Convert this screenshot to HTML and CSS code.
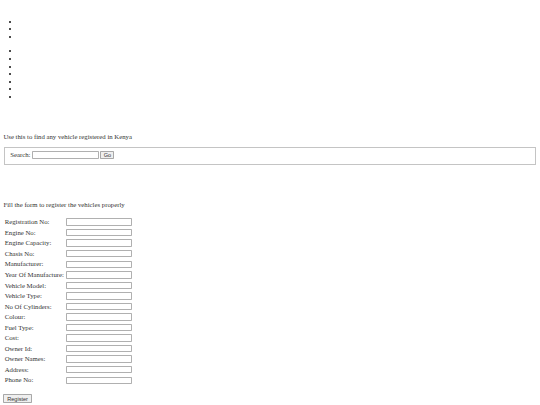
FILE: index.html
```html
<!DOCTYPE html>
<html lang="en">
<head>
<meta charset="utf-8">
<title>Vehicle Registry</title>
<link rel="stylesheet" href="styles.css">
</head>
<body>
<div class="nav">
  <ul class="menu">
    <li><a href="#"></a></li>
    <li><a href="#"></a></li>
    <li><a href="#"></a></li>
  </ul>
  <ul class="menu">
    <li><a href="#"></a></li>
    <li><a href="#"></a></li>
    <li><a href="#"></a></li>
    <li><a href="#"></a></li>
    <li><a href="#"></a></li>
    <li><a href="#"></a></li>
    <li><a href="#"></a></li>
  </ul>
</div>

<div class="search-section">
  <p class="intro">Use this to find any vehicle registered in Kenya</p>
  <form class="search-form">
    <fieldset class="search-box">
      <div class="search-row">
        <label class="search-label">Search:</label>
        <input class="field" type="text">
        <input class="btn btn-go" type="submit" value="Go">
      </div>
    </fieldset>
  </form>
</div>

<div class="register-section">
  <p class="intro-reg">Fill the form to register the vehicles properly</p>
  <form class="reg-form">
    <div class="reg-grid">
      <span class="label">Registration No:</span><input class="field" type="text">
      <span class="label">Engine No:</span><input class="field" type="text">
      <span class="label">Engine Capacity:</span><input class="field" type="text">
      <span class="label">Chasis No:</span><input class="field" type="text">
      <span class="label">Manufacturer:</span><input class="field" type="text">
      <span class="label">Year Of Manufacture:</span><input class="field" type="text">
      <span class="label">Vehicle Model:</span><input class="field" type="text">
      <span class="label">Vehicle Type:</span><input class="field" type="text">
      <span class="label">No Of Cylinders:</span><input class="field" type="text">
      <span class="label">Colour:</span><input class="field" type="text">
      <span class="label">Fuel Type:</span><input class="field" type="text">
      <span class="label">Cost:</span><input class="field" type="text">
      <span class="label">Owner Id:</span><input class="field" type="text">
      <span class="label">Owner Names:</span><input class="field" type="text">
      <span class="label">Address:</span><input class="field" type="text">
      <span class="label">Phone No:</span><input class="field" type="text">
    </div>
    <div class="actions">
      <input class="btn btn-register" type="submit" value="Register">
    </div>
  </form>
</div>
</body>
</html>
```

FILE: styles.css
```css
html {
  background: #fff;
}

body {
  margin: 3.375px;
  font-family: "Liberation Serif", "Times New Roman", serif;
  font-size: 6.75px;
  line-height: 7.6px;
  color: #333;
}

.nav {
  padding-top: 14.5px;
}

.menu {
  margin: 0;
  padding-left: 16.9px;
  list-style: disc outside;
  color: #111;
}

.menu + .menu {
  margin-top: 6.75px;
}

.menu li {
  height: 7.6px;
}

.intro {
  margin: 32.8px 0 6.2px;
}

.search-form {
  margin: 0;
}

.search-box {
  margin: 0 0.84px;
  padding: 2.4px 5px 4.4px;
  border: 1px solid #c4c4c4;
  min-inline-size: 0;
}

.search-row {
  display: flex;
  align-items: center;
  height: 8.6px;
}

.search-label {
  margin-right: 2px;
}

.field {
  box-sizing: border-box;
  width: 66.7px;
  height: 7.4px;
  margin: 0;
  padding: 0 1px;
  border: 1px solid #b0b0b0;
  border-radius: 0.8px;
  background: #fff;
  font-family: "Liberation Sans", Arial, sans-serif;
  font-size: 5.6px;
}

.btn {
  box-sizing: border-box;
  height: 8.6px;
  margin: 0;
  padding: 0;
  border: 1px solid #a8a8a8;
  border-radius: 0.8px;
  background: #efefef;
  font-family: "Liberation Sans", Arial, sans-serif;
  font-size: 5.6px;
  line-height: 6px;
  color: #333;
}

.btn-go {
  width: 14px;
  margin-left: 1.3px;
}

.btn-register {
  width: 28.4px;
}

.register-section {
  margin-top: 36.8px;
}

.intro-reg {
  margin: 0 0 7.9px;
}

.reg-form {
  margin: 0;
}

.reg-grid {
  display: grid;
  grid-template-columns: 61px 66.7px;
  grid-auto-rows: 10.55px;
  align-items: center;
  padding-left: 1.3px;
}

.label {
  white-space: nowrap;
}

.actions {
  margin-top: 8.7px;
}
```
